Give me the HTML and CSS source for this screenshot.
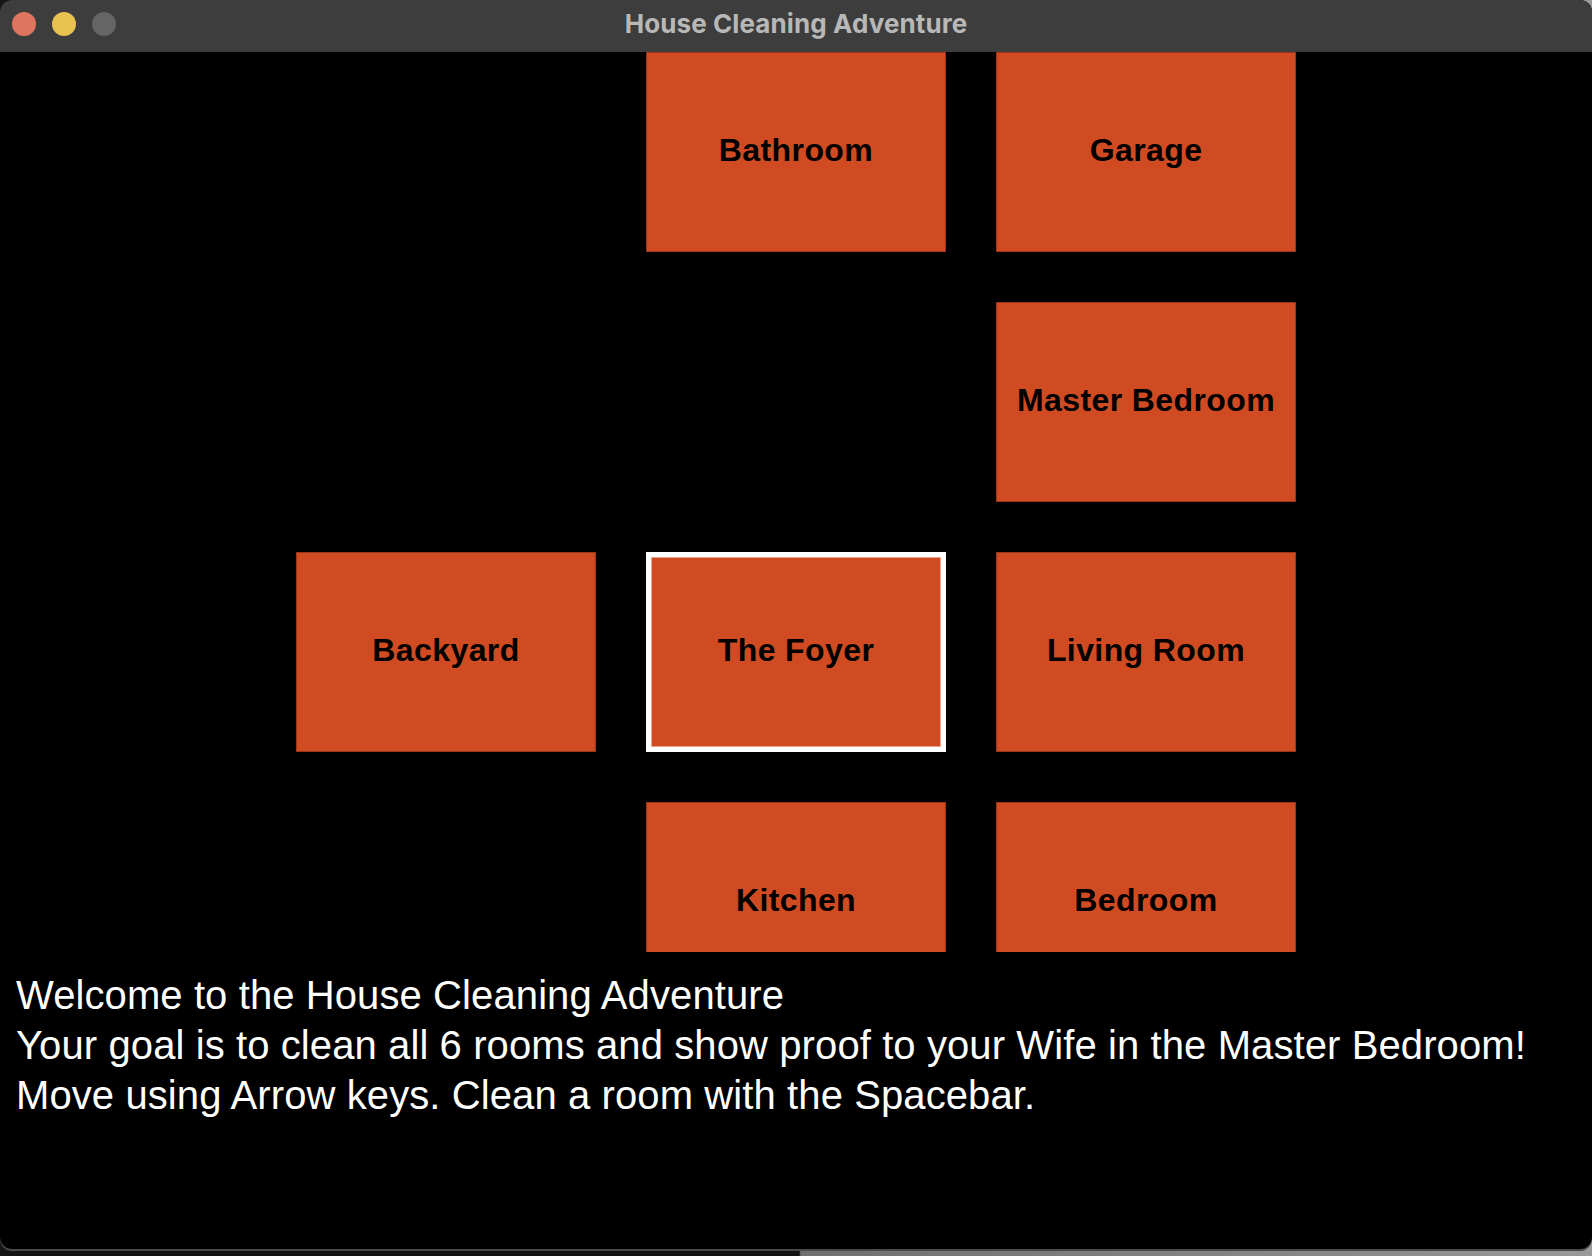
FILE: index.html
```html
<!DOCTYPE html>
<html lang="en">
<head>
<meta charset="utf-8">
<title>House Cleaning Adventure</title>
<link rel="stylesheet" href="styles.css">
</head>
<body>
<div class="window">
  <div class="titlebar">
    <div class="lights">
      <span class="light red"></span>
      <span class="light yellow"></span>
      <span class="light gray"></span>
    </div>
    <div class="title">House Cleaning Adventure</div>
  </div>
  <div class="map">
    <div class="room c2 r1">Bathroom</div>
    <div class="room c3 r1">Garage</div>
    <div class="room c3 r2">Master Bedroom</div>
    <div class="room c1 r3">Backyard</div>
    <div class="room c2 r3 current">The Foyer</div>
    <div class="room c3 r3">Living Room</div>
    <div class="room c2 r4">Kitchen</div>
    <div class="room c3 r4">Bedroom</div>
  </div>
  <div class="messages">
    <p>Welcome to the House Cleaning Adventure</p>
    <p>Your goal is to clean all 6 rooms and show proof to your Wife in the Master Bedroom!</p>
    <p>Move using Arrow keys. Clean a room with the Spacebar.</p>
  </div>
</div>
</body>
</html>
```
FILE: styles.css
```css
html, body {
  margin: 0;
  padding: 0;
}
body {
  width: 1592px;
  height: 1256px;
  overflow: hidden;
  background: linear-gradient(to right, #141414 0%, #141414 50.2%, #707070 50.3%, #8a8a8a 86%, #9a9a9a 100%);
}
.window {
  width: 1592px;
  height: 1249px;
  background: #000;
  border-radius: 12px;
  overflow: hidden;
  box-shadow: 0 2px 0 #4a4a4a;
  display: flex;
  flex-direction: column;
}
.titlebar {
  height: 52px;
  flex: 0 0 52px;
  background: #3d3d3d;
  position: relative;
  display: flex;
  align-items: center;
  justify-content: center;
}
.lights {
  position: absolute;
  left: 12px;
  top: 12px;
  display: flex;
  gap: 16px;
}
.light {
  width: 24px;
  height: 24px;
  border-radius: 50%;
  display: block;
}
.light.red { background: #df7561; }
.light.yellow { background: #e8c352; }
.light.gray { background: #656565; }
.title {
  font-family: Inter, "Open Sans", "Liberation Sans", sans-serif;
  font-weight: 700;
  font-size: 26px;
  color: #b8b8b8;
  letter-spacing: 0.1px;
  margin-top: -6px;
}
.map {
  height: 900px;
  flex: 0 0 900px;
  overflow: hidden;
  display: grid;
  grid-template-columns: repeat(3, 300px);
  grid-auto-rows: 200px;
  column-gap: 50px;
  row-gap: 50px;
  padding-left: 296px;
  box-sizing: border-box;
}
.room {
  background: #d14b22;
  border: 1px solid #9a3517;
  box-sizing: border-box;
  display: flex;
  align-items: center;
  justify-content: center;
  padding-bottom: 4px;
  font-family: "Liberation Sans", Arial, sans-serif;
  font-weight: 700;
  font-size: 32px;
  color: #000;
  letter-spacing: 0.4px;
}
.room.current {
  border: 5px solid #fff;
  box-shadow: inset 0 0 0 1px #e9a58f;
}
.c1 { grid-column: 1; }
.c2 { grid-column: 2; }
.c3 { grid-column: 3; }
.r1 { grid-row: 1; }
.r2 { grid-row: 2; }
.r3 { grid-row: 3; }
.r4 { grid-row: 4; }
.messages {
  padding: 18px 0 0 16px;
  font-family: "Liberation Sans", Arial, sans-serif;
  font-size: 40px;
  line-height: 50px;
  color: #fff;
  letter-spacing: 0.1px;
}
.messages p {
  margin: 0;
}
```
